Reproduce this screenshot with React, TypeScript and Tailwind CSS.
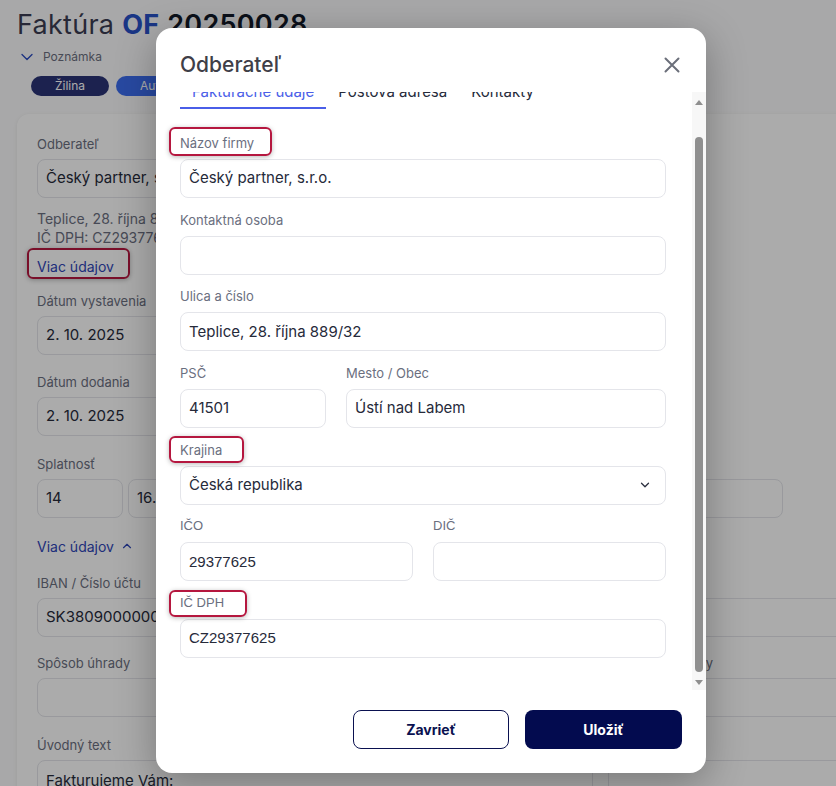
import React from "react";
import { ChevronDown, ChevronUp } from "lucide-react";

const sans = "font-['Inter','Noto_Sans',sans-serif]";
const arial = "font-['Liberation_Sans',Arial,sans-serif]";

interface FieldProps {
  label: string;
  value?: string;
  arialFont?: boolean;
  mark?: string;
  select?: boolean;
  className?: string;
}

const Mark: React.FC<{ className: string }> = ({ className }) => (
  <span
    className={`pointer-events-none absolute -left-[11px] rounded-md border-2 border-[#b5173f] shadow-[0_1px_5px_rgba(0,0,0,0.28)] ${className}`}
  />
);

const Field: React.FC<FieldProps> = ({ label, value, arialFont, mark, select, className }) => (
  <div className={`flex flex-col ${className ?? ""}`}>
    <div className="relative mb-[7px] flex h-[18px] items-center">
      {mark && <Mark className={mark} />}
      <span className={`text-[13px] leading-[18px] text-[#6b6f80] ${arialFont ? arial : ""}`}>{label}</span>
    </div>
    <div className="flex h-[39px] items-center justify-between rounded-lg border border-[#e4e5ea] bg-white px-2">
      <span className={`text-[15px] text-[#262a3a] ${arialFont ? arial : ""}`}>{value}</span>
      {select && <ChevronDown size={14} strokeWidth={2.2} className="mr-[5px] text-[#2b2f3f]" />}
    </div>
  </div>
);

const BgField: React.FC<{ label: string; value?: string; className?: string }> = ({ label, value, className }) => (
  <div className={`flex flex-col ${className ?? ""}`}>
    <span className="mb-[5px] text-[13px] leading-5 text-[#6b6f80]">{label}</span>
    <div className="flex h-[39px] items-center rounded-lg border border-[#e4e5ea] px-2 text-[15px] text-[#262a3a]">
      {value}
    </div>
  </div>
);

const Background: React.FC = () => (
  <div className="flex flex-col">
    <h1 className="pl-[17px] pt-[8px] text-[27px] leading-[34px] tracking-[0.01em] text-[#3b3d53]">
      Faktúra <span className="font-bold text-[#2851c8]">OF</span>{" "}
      <span className="font-semibold text-[#111827]">20250028</span>
    </h1>
    <div className="ml-[17px] mt-[6px] flex h-[18px] items-center gap-[6px]">
      <ChevronDown size={20} strokeWidth={1.6} className="text-[#2a4bc0]" />
      <span className="text-[12px] text-[#6b6f80]">Poznámka</span>
    </div>
    <div className="ml-[31px] mt-[10px] flex gap-[7px]">
      <span className="flex h-5 w-[78px] items-center justify-center rounded-full bg-[#2a3477] text-[12px] text-white">
        Žilina
      </span>
      <span className="flex h-5 w-[110px] items-center justify-start rounded-full bg-[#3d6ef0] pl-6 text-[12px] text-white">
        Automaticky
      </span>
    </div>
    <div className="ml-[17px] mt-[18px] w-[1100px] rounded-xl bg-white pb-10 pl-5 pt-5 shadow-[0_1px_4px_rgba(0,0,0,0.08)]">
      <div className="grid grid-cols-[556px_556px] gap-x-[15px]">
        <div className="flex flex-col">
          <BgField label="Odberateľ" value="Český partner, s.r.o." />
          <p className="mt-[11px] text-[14px] leading-[19px] text-[#6b6f80]">Teplice, 28. října 889/32</p>
          <p className="text-[14px] leading-[19px] text-[#6b6f80]">IČ DPH: CZ29377625</p>
          <div className="relative mt-[7px] h-5 w-fit">
            <span className="pointer-events-none absolute -left-[10px] -top-[6px] h-[31px] w-[103px] rounded-md border-2 border-[#b5173f] shadow-[0_1px_5px_rgba(0,0,0,0.28)]" />
            <span className="text-[14px] leading-5 text-[#2f46b8]">Viac údajov</span>
          </div>
        </div>
        <div />
      </div>
      <BgField label="Dátum vystavenia" value="2. 10. 2025" className="mt-[17px] w-[556px]" />
      <BgField label="Dátum dodania" value="2. 10. 2025" className="mt-[17px] w-[556px]" />
      <div className="mt-[18px] grid grid-cols-[556px_175px] gap-x-[15px]">
        <div className="flex flex-col">
          <span className="mb-[5px] text-[13px] leading-5 text-[#6b6f80]">Splatnosť</span>
          <div className="flex gap-[5px]">
            <div className="flex h-[39px] w-[86px] items-center rounded-lg border border-[#e4e5ea] px-2 text-[15px] text-[#262a3a]">14</div>
            <div className="flex h-[39px] flex-1 items-center rounded-lg border border-[#e4e5ea] px-2 text-[15px] text-[#262a3a]">16. 10. 2025</div>
          </div>
        </div>
        <BgField label="Mena" value="EUR" />
      </div>
      <div className="mt-[18px] flex h-5 items-center gap-[6px] text-[14px] text-[#2f46b8]">
        Viac údajov <ChevronUp size={14} strokeWidth={2} />
      </div>
      <div className="mt-[17px] grid grid-cols-[556px_556px] gap-x-[15px]">
        <BgField label="IBAN / Číslo účtu" value="SK3809000000005123456789" />
        <BgField label="SWIFT" value="GIBASKBX" />
      </div>
      <div className="mt-[16px] grid grid-cols-[556px_556px] gap-x-[15px]">
        <BgField label="Spôsob úhrady" />
        <BgField label="Číslo objednávky" />
      </div>
      <div className="mt-[18px] grid grid-cols-[556px_556px] gap-x-[15px]">
        <div className="flex flex-col">
          <span className="mb-[5px] text-[13px] leading-5 text-[#6b6f80]">Úvodný text</span>
          <div className="h-[80px] rounded-lg border border-[#e4e5ea] px-2 pt-[9px] text-[15px] text-[#262a3a]">Fakturujeme Vám:</div>
        </div>
        <div className="flex flex-col">
          <span className="mb-[5px] text-[13px] leading-5 text-[#6b6f80]">Poznámka</span>
          <div className="h-[80px] rounded-lg border border-[#e4e5ea]" />
        </div>
      </div>
    </div>
  </div>
);

const ScrollArrow: React.FC<{ down?: boolean }> = ({ down }) => (
  <svg width="8" height="5" viewBox="0 0 8 5" className="shrink-0">
    <polygon points={down ? "0,0 8,0 4,5" : "4,0 8,5 0,5"} fill="#8f8f8f" />
  </svg>
);

const Modal: React.FC = () => (
  <div className="absolute left-[156px] top-[28px] flex h-[745px] w-[550px] flex-col overflow-hidden rounded-2xl bg-white shadow-[0_10px_40px_rgba(0,0,0,0.3)]">
    <div className="flex h-[64px] shrink-0 items-start justify-between pl-6 pr-[26px] pt-[23px]">
      <h2 className="text-[21px] font-medium leading-7 text-[#3f3f48]">Odberateľ</h2>
      <button className="mt-[6px] text-[#6b6f7a]">
        <svg width="16" height="16" viewBox="0 0 16 16" fill="none" stroke="currentColor" strokeWidth="2" strokeLinecap="round">
          <path d="M1.5 1.5L14.5 14.5M14.5 1.5L1.5 14.5" />
        </svg>
      </button>
    </div>

    <div className="flex h-[598px] shrink-0">
      <div className="flex-1 overflow-hidden pl-6 pr-[26px]">
        <div className="-mt-[10px] flex flex-col">
          <div className="flex text-[15px] leading-5">
            <span className="border-b-2 border-[#4a5ee8] px-3 pb-[5px] text-[#4a5ee8]">Fakturačné údaje</span>
            <span className="px-3 pb-[5px] text-[#262a3a]">Poštová adresa</span>
            <span className="px-3 pb-[5px] text-[#262a3a]">Kontakty</span>
          </div>
          <div className="mt-[25px] flex flex-col gap-[12.7px]">
            <Field label="Názov firmy" value="Český partner, s.r.o." mark="-top-[7px] h-[29px] w-[103px]" />
            <Field label="Kontaktná osoba" />
            <Field label="Ulica a číslo" value="Teplice, 28. října 889/32" />
            <div className="grid grid-cols-[146px_1fr] gap-x-5">
              <Field label="PSČ" value="41501" />
              <Field label="Mesto / Obec" value="Ústí nad Labem" />
            </div>
            <Field label="Krajina" value="Česká republika" select mark="-top-[5px] h-[27px] w-[75px]" />
            <div className="grid grid-cols-2 gap-x-5">
              <Field label="IČO" value="29377625" arialFont />
              <Field label="DIČ" arialFont />
            </div>
            <Field label="IČ DPH" value="CZ29377625" arialFont mark="-top-[4px] h-[27px] w-[78px]" />
          </div>
        </div>
      </div>
      <div className="flex w-[14px] flex-col items-center bg-[#f7f7f7]">
        <div className="mt-[8px]">
          <ScrollArrow />
        </div>
        <div className="mt-[32px] h-[535px] w-2 rounded-full bg-[#8f8f8f]" />
        <div className="mt-[8px]">
          <ScrollArrow down />
        </div>
      </div>
    </div>

    <div className="flex flex-1 items-start justify-end gap-4 px-6 pt-5">
      <button className="h-[39px] w-[156px] rounded-lg border border-[#0a1150] bg-white text-[14px] font-bold text-[#0a1150]">
        Zavrieť
      </button>
      <button className="h-[39px] w-[157px] rounded-lg bg-[#030b4f] text-[14px] font-bold text-white">
        Uložiť
      </button>
    </div>
  </div>
);

export default function App() {
  return (
    <div className={`relative h-[786px] w-full overflow-hidden bg-[#fbfbfc] ${sans}`}>
      <Background />
      <div className="absolute inset-0 bg-black/[0.33]" />
      <Modal />
    </div>
  );
}
